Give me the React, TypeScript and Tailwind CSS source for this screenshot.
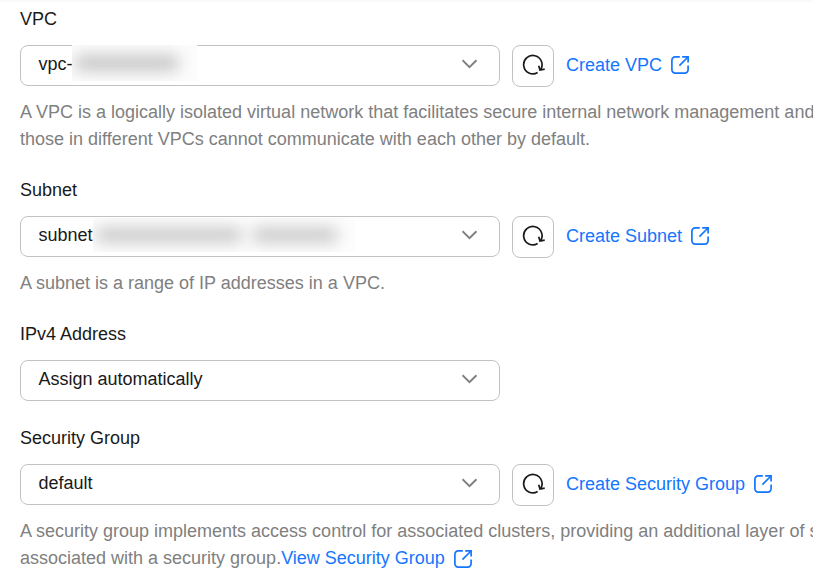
import type { ReactNode } from "react";

function ChevronIcon() {
  return (
    <svg width="16" height="10" viewBox="0 0 16 10" fill="none" stroke="#808080" strokeWidth="2">
      <path d="M0.5 1.2L7.5 8.2L14.5 1.2" />
    </svg>
  );
}

function RefreshIcon() {
  return (
    <svg width="24" height="24" viewBox="0 0 24 24" fill="none" stroke="#191919" strokeWidth="1.7">
      <path d="M16.6 18.6A9.2 9.2 0 1 1 19.4 16" />
      <path d="M17.7 11.8L19 16.1L23.7 15.1" />
    </svg>
  );
}

function ExternalIcon() {
  return (
    <svg width="20" height="20" viewBox="0 0 20 20" fill="none" stroke="#1476ff" strokeWidth="1.7" className="shrink-0">
      <path d="M9.8 1.9H5.2A3.3 3.3 0 0 0 1.9 5.2V14.8A3.3 3.3 0 0 0 5.2 18.1H14.8A3.3 3.3 0 0 0 18.1 14.8V10.6" />
      <path d="M12.2 1.9H18.1V7.6" />
      <path d="M18 2L9.4 10.6" />
    </svg>
  );
}

function ExternalLink({ children }: { children: ReactNode }) {
  return (
    <a href="#" className="inline-flex items-center gap-2 text-[#1476ff]">
      {children}
      <ExternalIcon />
    </a>
  );
}

interface FieldProps {
  label: string;
  value: ReactNode;
  link?: string;
  children?: ReactNode;
  className?: string;
}

function Field({ label, value, link, children, className }: FieldProps) {
  return (
    <section className={className}>
      <div className="mb-3">{label}</div>
      <div className="flex h-[42px] items-start">
        <button
          type="button"
          className="flex h-[41px] w-[480px] shrink-0 items-center justify-between rounded-lg border border-[#c2c2c2] pr-[21.5px] pl-[17.5px] pb-[3px]"
        >
          <span className="flex items-center">{value}</span>
          <ChevronIcon />
        </button>
        {link && (
          <>
            <button
              type="button"
              aria-label="Refresh"
              className="mr-3 ml-3 flex size-[42px] shrink-0 items-center justify-center rounded-lg border border-[#c2c2c2]"
            >
              <RefreshIcon />
            </button>
            <div className="flex h-10 items-center">
              <ExternalLink>{link}</ExternalLink>
            </div>
          </>
        )}
      </div>
      {children && <p className="mt-3 text-[#808080]">{children}</p>}
    </section>
  );
}

export default function App() {
  return (
    <main className="h-[581px] overflow-hidden border-t-2 border-[#fafafa] bg-white pt-1 pl-5 font-['Liberation_Sans',Arial,sans-serif] text-[18px] leading-[27px] whitespace-nowrap text-[#191919]">
      <Field
        label="VPC"
        className="mb-6"
        link="Create VPC"
        value={
          <>
            vpc-
            {/* redacted name */}
            <span className="-mt-[3px] -ml-px flex h-9 w-[125px] items-center overflow-hidden bg-[#fcfcfc]">
              <span className="ml-1 h-3.5 w-[102px] bg-[#bebebe] blur-[8px]" />
            </span>
          </>
        }
      >
        A VPC is a logically isolated virtual network that facilitates secure internal network management and
        <br />
        those in different VPCs cannot communicate with each other by default.
      </Field>
      <Field
        label="Subnet"
        className="mb-6"
        link="Create Subnet"
        value={
          <>
            subnet
            <span className="flex h-[34px] w-[262px] items-center gap-3 overflow-hidden bg-[#fdfdfd]">
              <span className="ml-1 h-3.5 w-[144px] bg-[#c4c4c4] blur-[8px]" />
              <span className="h-3.5 w-[84px] bg-[#c4c4c4] blur-[8px]" />
            </span>
          </>
        }
      >
        A subnet is a range of IP addresses in a VPC.
      </Field>
      <Field label="IPv4 Address" className="mb-[23px]" value="Assign automatically" />
      <Field label="Security Group" link="Create Security Group" value="default">
        A security group implements access control for associated clusters, providing an additional layer of security
        <br />
        <span className="flex items-center">
          associated with a security group.
          <ExternalLink>View Security Group</ExternalLink>
        </span>
      </Field>
    </main>
  );
}
